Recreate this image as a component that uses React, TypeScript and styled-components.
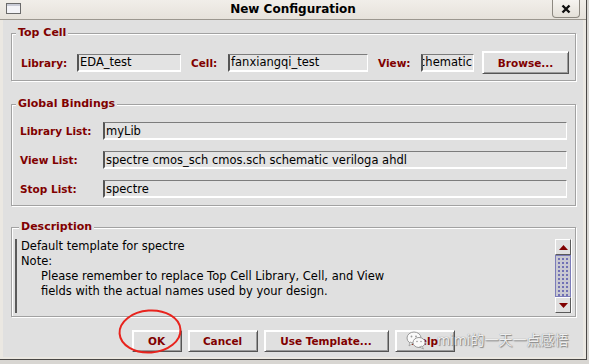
import React from 'react';
import styled, { createGlobalStyle } from 'styled-components';

const maroon = '#800000';
const panel = '#e0e0e0';
const frame = '#ebe8e2';

const GlobalStyle = createGlobalStyle`
  html, body {
    margin: 0;
    padding: 0;
    background: #d8d6d2;
    width: 589px;
    height: 364px;
    overflow: hidden;
  }
  * {
    box-sizing: border-box;
  }
`;

const Dialog = styled.div`
  position: relative;
  width: 587px;
  height: 360px;
  display: flex;
  flex-direction: column;
  background: ${frame};
  border-right: 1px solid #4a4846;
  border-bottom: 1px solid #4a4846;
  font-family: 'DejaVu Sans', 'Noto Sans', sans-serif;
`;

const TitleBar = styled.div`
  position: relative;
  height: 20px;
  flex: none;
  display: flex;
  align-items: center;
  justify-content: center;
  background: linear-gradient(#f1eee9, #e6e2db);
  border-bottom: 1px solid #9b978f;
`;

const Title = styled.div`
  font-weight: bold;
  font-size: 12px;
  line-height: 19px;
  color: #000;
`;

const WinIcon = styled.svg`
  position: absolute;
  left: 6px;
  top: 3px;
`;

const CloseButton = styled.div`
  position: absolute;
  right: 6px;
  top: 0;
  width: 28px;
  height: 18px;
  display: flex;
  align-items: center;
  justify-content: center;
  background: linear-gradient(#f6f4f0, #e4e0d8);
  border: 1px solid #8d8981;
  border-top: none;
  border-radius: 0 0 4px 4px;
`;

const Body = styled.div`
  flex: 1;
  margin: 0 3px 2px 3px;
  background: ${panel};
  display: flex;
  flex-direction: column;
  padding-bottom: 5px;
`;

const Group = styled.fieldset<{ $mt: number; $pt: number; $pb: number; $px: number }>`
  margin: ${(p) => p.$mt}px 7px 0 8px;
  padding: ${(p) => p.$pt}px ${(p) => p.$px}px ${(p) => p.$pb}px;
  border: 1px solid #a2a2a2;
  box-shadow: 1px 1px 0 #fff, inset 1px 1px 0 #fff;
  min-width: 0;
`;

const Legend = styled.legend`
  margin-left: 4px;
  padding: 0 2px;
  background: ${panel};
  color: ${maroon};
  font-weight: bold;
  font-size: 11px;
  line-height: 14px;
`;

const TopRow = styled.div`
  display: flex;
  align-items: center;
  height: 23px;
  padding-left: 9px;
`;

const Label = styled.div<{ $w?: number; $ml?: number }>`
  width: ${(p) => (p.$w ? `${p.$w}px` : 'auto')};
  margin-left: ${(p) => p.$ml ?? 0}px;
  flex: none;
  color: ${maroon};
  font-weight: bold;
  font-size: 10.5px;
  white-space: nowrap;
`;

const Field = styled.div<{ $w?: number; $end?: boolean }>`
  width: ${(p) => (p.$w ? `${p.$w}px` : 'auto')};
  height: 18px;
  flex: none;
  display: flex;
  align-items: center;
  justify-content: ${(p) => (p.$end ? 'flex-end' : 'flex-start')};
  overflow: hidden;
  padding: 0 1px;
  background: #e3e3e3;
  border-top: 1px solid #7c7c7c;
  border-left: 2px solid #555;
  border-right: 1px solid #fff;
  border-bottom: 2px solid #fff;
  font-size: 11.5px;
  color: #000;
  white-space: nowrap;
`;

const Button = styled.div<{ $w: number; $h?: number }>`
  width: ${(p) => p.$w}px;
  height: ${(p) => p.$h ?? 22}px;
  flex: none;
  display: flex;
  align-items: center;
  justify-content: center;
  background: ${panel};
  border: 1px solid;
  border-color: #fff #555 #555 #fff;
  box-shadow: inset 1px 1px 0 #fff, inset -1px -1px 0 #9a9a9a;
  color: ${maroon};
  font-weight: bold;
  font-size: 10.5px;
  white-space: nowrap;
`;

const BindingRows = styled.div`
  display: grid;
  grid-template-columns: 83px 1fr;
  row-gap: 11px;
  align-items: center;
  padding: 0 8px;
`;

const TextArea = styled.div`
  height: 74px;
  display: flex;
  border-left: 2px solid #5a5a5a;
  border-right: 1px solid #fff;
`;

const TextContent = styled.div`
  flex: 1;
  padding-left: 4px;
  font-size: 11.5px;
  line-height: 15px;
  color: #000;
  white-space: nowrap;
  overflow: hidden;
`;

const Indent = styled.div`
  padding-left: 20px;
`;

const ScrollBar = styled.div`
  width: 16px;
  flex: none;
  display: flex;
  flex-direction: column;
`;

const ScrollArrow = styled.div`
  height: 16px;
  flex: none;
  display: flex;
  align-items: center;
  justify-content: center;
  background: ${panel};
  border: 1px solid;
  border-color: #fff #5a5a5a #5a5a5a #fff;
`;

const Thumb = styled.div`
  flex: 1;
  border: 1px solid #7c7cb8;
  background-color: #c9c9d2;
  background-image: radial-gradient(circle, #6e6eb4 0.7px, transparent 0.9px);
  background-size: 4px 4px;
  background-position: 1px 1px;
`;

const ButtonRow = styled.div`
  display: flex;
  justify-content: center;
  gap: 6px;
  margin-top: 13px;
`;

const Circle = styled.svg`
  position: absolute;
  left: 116px;
  top: 308px;
  pointer-events: none;
`;

const Watermark = styled.div`
  position: absolute;
  left: 406px;
  top: 330px;
  display: flex;
  align-items: center;
  gap: 11px;
  white-space: nowrap;
  pointer-events: none;
`;

const WatermarkText = styled.div`
  font-family: 'Noto Sans', 'Noto Sans CJK SC', sans-serif;
  font-size: 14px;
  line-height: 20px;
  color: rgba(250, 250, 250, 0.92);
  text-shadow: 0 0 1px #777, 1px 1px 1px #888;
  white-space: nowrap;
`;

const Arrow = ({ down }: { down?: boolean }) => (
  <svg width="9" height="5" viewBox="0 0 9 5">
    <polygon points={down ? '0,0 9,0 4.5,5' : '0,5 9,5 4.5,0'} fill={maroon} />
  </svg>
);

const WeChatLogo = () => (
  <svg width="20" height="20" viewBox="0 0 20 20">
    <ellipse cx="8" cy="8" rx="7" ry="6" fill="#fafafa" stroke="#9a9a9a" strokeWidth="1" />
    <polygon points="4,12 3,16 7,13" fill="#fafafa" stroke="#9a9a9a" strokeWidth="0.8" />
    <ellipse cx="13" cy="12.5" rx="6" ry="5" fill="#fafafa" stroke="#9a9a9a" strokeWidth="1" />
    <polygon points="16,16 17.5,19 13.5,17" fill="#fafafa" stroke="#9a9a9a" strokeWidth="0.8" />
    <circle cx="5.5" cy="6.5" r="0.9" fill="#9a9a9a" />
    <circle cx="10" cy="6.5" r="0.9" fill="#9a9a9a" />
    <circle cx="11" cy="11.5" r="0.8" fill="#9a9a9a" />
    <circle cx="15" cy="11.5" r="0.8" fill="#9a9a9a" />
  </svg>
);

const App = () => (
  <>
    <GlobalStyle />
    <Dialog>
      <TitleBar>
        <WinIcon width="15" height="11" viewBox="0 0 15 11">
          <rect x="0.5" y="0.5" width="14" height="10" fill="#f3f3f7" stroke="#6a6a6a" />
          <rect x="1" y="1" width="13" height="2" fill="#c9cbd6" />
        </WinIcon>
        <Title>New Configuration</Title>
        <CloseButton>
          <svg width="10" height="10" viewBox="0 0 10 10">
            <path d="M1.5 1.5 L8.5 8.5 M8.5 1.5 L1.5 8.5" stroke="#111" strokeWidth="2.4" />
          </svg>
        </CloseButton>
      </TitleBar>

      <Body>
        <Group $mt={6} $pt={11} $pb={6} $px={0}>
          <Legend>Top Cell</Legend>
          <TopRow>
            <Label $w={56}>Library:</Label>
            <Field $w={104}>EDA_test</Field>
            <Label $w={37} $ml={10}>Cell:</Label>
            <Field $w={140}>fanxiangqi_test</Field>
            <Label $w={43} $ml={10}>View:</Label>
            <Field $w={53} $end>schematic</Field>
            <Button $w={87} $h={23} style={{ marginLeft: 8 }}>
              Browse...
            </Button>
          </TopRow>
        </Group>

        <Group $mt={16} $pt={11} $pb={7} $px={0}>
          <Legend>Global Bindings</Legend>
          <BindingRows>
            <Label>Library List:</Label>
            <Field>myLib</Field>
            <Label>View List:</Label>
            <Field>spectre cmos_sch cmos.sch schematic veriloga ahdl</Field>
            <Label>Stop List:</Label>
            <Field>spectre</Field>
          </BindingRows>
        </Group>

        <Group $mt={14} $pt={5} $pb={3} $px={3}>
          <Legend>Description</Legend>
          <TextArea>
            <TextContent>
              <div>Default template for spectre</div>
              <div>Note:</div>
              <Indent>Please remember to replace Top Cell Library, Cell, and View</Indent>
              <Indent>fields with the actual names used by your design.</Indent>
            </TextContent>
            <ScrollBar>
              <ScrollArrow>
                <Arrow />
              </ScrollArrow>
              <Thumb />
              <ScrollArrow>
                <Arrow down />
              </ScrollArrow>
            </ScrollBar>
          </TextArea>
        </Group>

        <ButtonRow>
          <Button $w={50}>OK</Button>
          <Button $w={70}>Cancel</Button>
          <Button $w={125}>Use Template...</Button>
          <Button $w={60}>Help</Button>
        </ButtonRow>
      </Body>

      <Circle width="68" height="48" viewBox="0 0 68 48">
        <ellipse cx="34" cy="23.5" rx="30.5" ry="21" fill="none" stroke="#e8231d" strokeWidth="2" transform="rotate(-4 34 23.5)" />
      </Circle>

      <Watermark>
        <WeChatLogo />
        <WatermarkText>mimi的一天一点感悟</WatermarkText>
      </Watermark>
    </Dialog>
  </>
);

export default App;
